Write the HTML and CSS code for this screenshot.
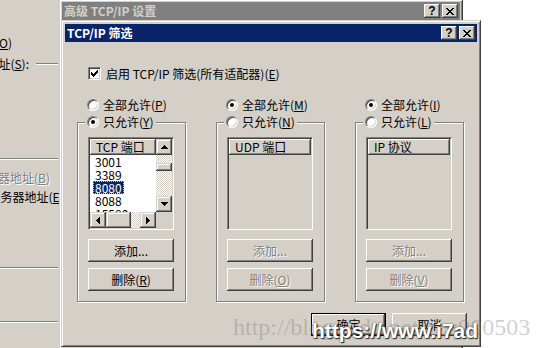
FILE: index.html
```html
<!DOCTYPE html>
<html lang="zh-CN">
<head>
    <meta charset="UTF-8">
    <title>TCP/IP 筛选</title>
    <link rel="stylesheet" href="styles.css">
</head>
<body>
<div class="desktop">
    <div class="behind">
        <div class="clip-row end-a"><span>自动获得 IP 地址(<u>O</u>)</span></div>
        <div class="group-title">
            <div class="clip-row end-b"><span>使用下面的 IP 地址(<u>S</u>):</span></div>
            <div class="etch"></div>
        </div>
        <div class="etch sep-ip"></div>
        <div class="clip-row end-c disabled-text"><span>自动获得 DNS 服务器地址(<u>B</u>)</span></div>
        <div class="clip-row end-d"><span>使用下面的 DNS 服务器地址(<u>E</u>):</span></div>
        <div class="etch sep-dns"></div>
        <div class="etch sep-last"></div>
    </div>

    <div class="window back-win">
        <div class="titlebar inactive">
            <span class="title-text">高级 TCP/IP 设置</span>
            <span class="cap-btn">?</span>
            <span class="cap-btn"><svg width="8" height="7" viewBox="0 0 8 7"><path d="M0 0h2v1H0zM6 0h2v1H6zM1 1h2v1H1zM5 1h2v1H5zM2 2h4v1H2zM3 3h2v1H3zM2 4h4v1H2zM1 5h2v1H1zM5 5h2v1H5zM0 6h2v1H0zM6 6h2v1H6z"/></svg></span>
        </div>
    </div>

    <div class="window front-win">
        <div class="titlebar active">
            <span class="title-text">TCP/IP 筛选</span>
            <span class="cap-btn">?</span>
            <span class="cap-btn"><svg width="8" height="7" viewBox="0 0 8 7"><path d="M0 0h2v1H0zM6 0h2v1H6zM1 1h2v1H1zM5 1h2v1H5zM2 2h4v1H2zM3 3h2v1H3zM2 4h4v1H2zM1 5h2v1H1zM5 5h2v1H5zM0 6h2v1H0zM6 6h2v1H6z"/></svg></span>
        </div>

        <div class="dlg-body">
            <div class="check-row">
                <span class="checkbox"><svg width="7" height="7" viewBox="0 0 7 7"><path d="M0 2h1v3H0zM1 3h1v3H1zM2 4h1v3H2zM3 3h1v3H3zM4 2h1v3H4zM5 1h1v3H5zM6 0h1v3H6z"/></svg></span>
                <span>启用 TCP/IP 筛选(所有适配器)(<u>E</u>)</span>
            </div>

            <div class="columns">
                <div class="column">
                    <div class="radio-row"><span class="radio"></span><span>全部允许(<u>P</u>)</span></div>
                    <div class="group">
                        <div class="radio-row legend"><span class="radio on"></span><span>只允许(<u>Y</u>)</span></div>
                        <div class="listbox scrolled">
                            <div class="list-head">TCP 端口</div>
                            <div class="list-items">
                                <div class="item"><span>3001</span></div>
                                <div class="item"><span>3389</span></div>
                                <div class="item"><span class="sel">8080</span></div>
                                <div class="item"><span>8088</span></div>
                                <div class="item"><span>15580</span></div>
                            </div>
                            <div class="vscroll">
                                <div class="sb-btn"><svg width="7" height="4" viewBox="0 0 7 4"><path d="M3 0h1v1h1v1h1v1h1v1H0V3h1V2h1V1h1z"/></svg></div>
                                <div class="track"><div class="thumb"></div></div>
                                <div class="sb-btn"><svg width="7" height="4" viewBox="0 0 7 4"><path d="M0 0h7v1H6v1H5v1H4v1H3V3H2V2H1V1H0z"/></svg></div>
                            </div>
                            <div class="hscroll">
                                <div class="sb-btn"><svg width="4" height="7" viewBox="0 0 4 7"><path d="M3 0h1v7H3V6H2V5H1V4H0V3h1V2h1V1h1z"/></svg></div>
                                <div class="thumb"></div>
                                <div class="track"></div>
                                <div class="sb-btn"><svg width="4" height="7" viewBox="0 0 4 7"><path d="M0 0h1v1h1v1h1v1h1v1H3v1H2v1H1v1H0z"/></svg></div>
                            </div>
                            <div class="corner"></div>
                        </div>
                        <button class="btn first">添加...</button>
                        <button class="btn">删除(<u>R</u>)</button>
                    </div>
                </div>

                <div class="column">
                    <div class="radio-row"><span class="radio on"></span><span>全部允许(<u>M</u>)</span></div>
                    <div class="group">
                        <div class="radio-row legend"><span class="radio"></span><span>只允许(<u>N</u>)</span></div>
                        <div class="listbox off">
                            <div class="list-head">UDP 端口</div>
                        </div>
                        <button class="btn first" disabled>添加...</button>
                        <button class="btn" disabled>删除(<u>O</u>)</button>
                    </div>
                </div>

                <div class="column">
                    <div class="radio-row"><span class="radio on"></span><span>全部允许(<u>I</u>)</span></div>
                    <div class="group">
                        <div class="radio-row legend"><span class="radio"></span><span>只允许(<u>L</u>)</span></div>
                        <div class="listbox off">
                            <div class="list-head">IP 协议</div>
                        </div>
                        <button class="btn first" disabled>添加...</button>
                        <button class="btn" disabled>删除(<u>V</u>)</button>
                    </div>
                </div>
            </div>

            <div class="footer">
                <button class="btn wide default">确定</button>
                <button class="btn wide">取消</button>
            </div>
        </div>
    </div>

    <div class="wm wm-csdn">http://blog.csdn.net/zzq900503</div>
    <div class="wm wm-site">https://www.i7ad</div>
</div>
</body>
</html>
```

FILE: styles.css
```css
* {
    margin: 0;
    padding: 0;
    box-sizing: border-box;
}
body {
    width: 547px;
    height: 348px;
    overflow: hidden;
    background: #fff;
    font-family: "Noto Sans CJK SC", "Noto Sans", sans-serif;
    font-size: 12px;
    color: #000;
}
u {
    text-decoration: underline;
    text-underline-offset: 1px;
}
.desktop {
    position: relative;
    width: 547px;
    height: 348px;
    overflow: hidden;
}

/* the properties window behind, only its right edge shows */
.behind {
    position: absolute;
    left: 0;
    top: 0;
    width: 59px;
    height: 348px;
    background: #d4d0c8;
    overflow: hidden;
    padding-top: 36px;
}
.clip-row {
    display: flex;
    justify-content: flex-end;
    white-space: nowrap;
    height: 14px;
    line-height: 14px;
}
.clip-row span {
    flex: none;
}
.end-a { width: 12px; }
.end-b { width: 29px; flex: none; }
.end-c { width: 50px; margin-top: 11px; }
.end-d { width: 67px; margin-top: 5px; }
.group-title {
    display: flex;
    align-items: center;
    height: 14px;
    margin-top: 7px;
}
.group-title .etch {
    flex: 1;
    margin-left: 7px;
}
.etch {
    height: 2px;
    border-top: 1px solid #808080;
    border-bottom: 1px solid #fff;
    margin-right: 1px;
}
.sep-ip { margin-top: 87px; }
.sep-dns { margin-top: 63px; }
.sep-last { margin-top: 52px; }
.disabled-text {
    color: #808080;
    text-shadow: 1px 1px #fff;
}

/* windows */
.window {
    position: absolute;
    background: #d4d0c8;
    border: 1px solid;
    border-color: #d4d0c8 #404040 #404040 #d4d0c8;
    box-shadow: inset 1px 1px #fff, inset -1px -1px #808080;
}
.back-win {
    left: 59px;
    top: -1px;
    width: 404px;
    height: 360px;
    padding: 2px;
}
.front-win {
    left: 61px;
    top: 20px;
    width: 420px;
    height: 327px;
    padding: 3px;
}
.titlebar {
    display: flex;
    align-items: center;
    gap: 2px;
    height: 18px;
    padding: 0 2px;
    font-weight: bold;
    color: #fff;
}
.titlebar.active { background: #0a246a; }
.titlebar.inactive {
    background: #808080;
    color: #d4d0c8;
}
.title-text {
    flex: 1;
    line-height: 18px;
    white-space: nowrap;
}
.cap-btn {
    width: 16px;
    height: 14px;
    display: flex;
    align-items: center;
    justify-content: center;
    background: #d4d0c8;
    box-shadow: inset -1px -1px #404040, inset 1px 1px #fff, inset -2px -2px #808080;
    color: #000;
    font: bold 12px/14px "Liberation Sans", sans-serif;
}
.cap-btn svg { fill: #000; }

/* dialog body */
.dlg-body {
    padding: 25px 10px 0 12px;
}
.check-row {
    display: flex;
    align-items: center;
    gap: 5px;
    height: 13px;
    margin-left: 11px;
    line-height: 14px;
    white-space: nowrap;
}
.checkbox {
    width: 13px;
    height: 13px;
    display: flex;
    align-items: center;
    justify-content: center;
    background: #fff;
    border: 1px solid;
    border-color: #808080 #fff #fff #808080;
    box-shadow: inset 1px 1px #404040, inset -1px -1px #d4d0c8;
}
.columns {
    display: flex;
    gap: 30px;
    margin-top: 16px;
}
.column {
    width: 109px;
}
.radio-row {
    display: flex;
    align-items: center;
    gap: 4px;
    height: 18px;
    padding-left: 10px;
    line-height: 18px;
    white-space: nowrap;
}
.radio {
    position: relative;
    flex: none;
    width: 12px;
    height: 12px;
    border-radius: 50%;
    background: #fff;
    border: 1px solid;
    border-color: #808080 #fff #fff #808080;
    box-shadow: inset 1px 1px #404040, inset -1px -1px #d4d0c8;
}
.radio.on::after {
    content: "";
    position: absolute;
    left: 3px;
    top: 3px;
    width: 4px;
    height: 4px;
    border-radius: 50%;
    background: #000;
}
.group {
    margin-top: 8px;
    padding-bottom: 10px;
    border: 1px solid #808080;
    box-shadow: inset 1px 1px #fff, 1px 1px #fff;
}
.legend {
    width: fit-content;
    margin: -10px 0 0 7px;
    padding: 0 2px;
    background: #d4d0c8;
}

/* list boxes */
.listbox {
    width: 86px;
    height: 93px;
    margin: 6px 0 0 10px;
    padding: 1px;
    background: #fff;
    border: 1px solid;
    border-color: #808080 #fff #fff #808080;
    box-shadow: inset 1px 1px #404040, inset -1px -1px #d4d0c8;
}
.listbox.off { background: #d4d0c8; }
.listbox.scrolled {
    display: grid;
    grid-template-columns: 1fr 16px;
    grid-template-rows: 16px 1fr 16px;
}
.list-head {
    height: 16px;
    line-height: 16px;
    padding-left: 6px;
    background: #d4d0c8;
    box-shadow: inset -1px -1px #404040, inset 1px 1px #fff, inset -2px -2px #808080;
    white-space: nowrap;
}
.list-items {
    grid-column: 1;
    grid-row: 2;
    overflow: hidden;
    background: #fff;
}
.item {
    height: 13px;
    line-height: 13px;
    padding-left: 3px;
}
.item span {
    display: inline-block;
    padding: 0 2px;
}
.item .sel {
    background: #0a246a;
    color: #fff;
    outline: 1px dotted #d8c890;
    outline-offset: -1px;
}
.vscroll {
    grid-column: 2;
    grid-row: 1 / 3;
    display: flex;
    flex-direction: column;
}
.hscroll {
    grid-column: 1;
    grid-row: 3;
    display: flex;
}
.corner {
    grid-column: 2;
    grid-row: 3;
    background: #d4d0c8;
}
.sb-btn, .thumb {
    background: #d4d0c8;
    box-shadow: inset -1px -1px #404040, inset 1px 1px #d4d0c8, inset -2px -2px #808080, inset 2px 2px #fff;
}
.sb-btn {
    flex: none;
    width: 16px;
    height: 16px;
    display: flex;
    align-items: center;
    justify-content: center;
}
.sb-btn svg { fill: #000; }
.track {
    flex: 1;
    background: repeating-conic-gradient(#d4d0c8 0 25%, #fff 0 50%) 0 0 / 2px 2px;
}
.vscroll .thumb {
    height: 8px;
    margin-top: 8px;
}
.hscroll .thumb {
    flex: none;
    width: 25px;
}

/* push buttons */
.btn {
    display: flex;
    align-items: center;
    justify-content: center;
    width: 86px;
    height: 23px;
    margin: 6px 0 0 10px;
    border: none;
    background: #d4d0c8;
    font: inherit;
    color: #000;
    box-shadow: inset -1px -1px #404040, inset 1px 1px #fff, inset -2px -2px #808080, inset 2px 2px #d4d0c8;
}
.btn.first { margin-top: 9px; }
.btn:disabled {
    color: #808080;
    text-shadow: 1px 1px #fff;
}
.footer {
    display: flex;
    justify-content: flex-end;
    gap: 6px;
    margin-top: 11px;
}
.btn.wide {
    width: 75px;
    margin: 0;
}
.btn.default {
    border: 1px solid #000;
}

/* watermarks over the screenshot */
.wm {
    position: absolute;
    white-space: nowrap;
}
.wm-csdn {
    left: 233px;
    top: 315px;
    font: 24px/24px "Liberation Serif", serif;
    color: rgba(120, 120, 120, 0.35);
}
.wm-site {
    left: 312px;
    top: 320px;
    font: bold 21px/21px "Liberation Sans", sans-serif;
    color: #fff;
    text-shadow: 0 0 2px #333, 1px 1px 1px #222;
}
```
